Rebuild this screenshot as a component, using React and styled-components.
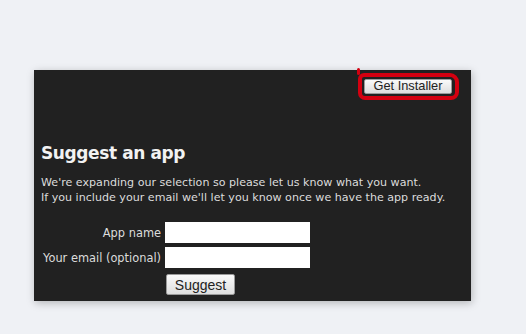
import React from 'react';
import styled, { createGlobalStyle } from 'styled-components';

const PAGE_BG = '#eff1f5';
const PANEL_BG = '#212121';
const RED = '#d40010';

const GlobalStyle = createGlobalStyle`
  html, body {
    margin: 0;
    padding: 0;
    background: ${PAGE_BG};
  }
  body {
    width: 526px;
    height: 334px;
    overflow: hidden;
  }
`

const Page = styled.div`
  padding: 70px 55px 0 34px;
`

const Panel = styled.div`
  width: 437px;
  height: 231px;
  box-sizing: border-box;
  background: ${PANEL_BG};
  box-shadow: 1px 2px 8px rgba(0, 0, 0, 0.25);
  padding: 9px 19px 0 7px;
  font-family: "DejaVu Sans", Verdana, sans-serif;
  color: #e2e2e2;
`

const TopBar = styled.div`
  display: flex;
  justify-content: flex-end;
`

const Highlight = styled.div`
  position: relative;
  display: flex;
  &::before {
    content: '';
    position: absolute;
    left: -6px;
    right: -7px;
    top: -6px;
    bottom: -6px;
    border: 4px solid ${RED};
    border-radius: 6px 9px 8px 7px;
  }
  &::after {
    content: '';
    position: absolute;
    left: -7px;
    top: -11px;
    width: 3px;
    height: 7px;
    background: ${RED};
    border-radius: 2px;
  }
`

const Button = styled.button`
  font-family: "Liberation Sans", Arial, sans-serif;
  font-size: ${p => p.$size || 12.8}px;
  color: #222;
  height: ${p => p.$h || 15}px;
  width: ${p => p.$w}px;
  padding: 0;
  border: 1px solid #9a9a9a;
  border-radius: 2px;
  background: linear-gradient(#fafafa, #dedede);
  line-height: 1;
`

const Title = styled.h1`
  margin: 48px 0 0 0;
  font-size: 17px;
  letter-spacing: -0.4px;
  font-weight: bold;
  color: #f2f2f2;
  line-height: 22px;
`

const Intro = styled.p`
  margin: 11px 0 0 0;
  font-size: 11.1px;
  line-height: 15px;
  color: #dcdcdc;
  white-space: nowrap;
`

const Form = styled.div`
  display: grid;
  grid-template-columns: 120px 145px;
  column-gap: 4px;
  row-gap: 4px;
  margin-top: 17px;
  align-items: center;
`

const Label = styled.label`
  text-align: right;
  font-size: 11.4px;
  color: #dcdcdc;
`

const Input = styled.input`
  box-sizing: border-box;
  width: 145px;
  height: 21px;
  border: none;
  background: #fff;
  margin: 0;
`

const ButtonCell = styled.div`
  grid-column: 2;
  padding: 2px 0 0 1px;
  display: flex;
`

export default function App() {
  return (
    <Page>
      <GlobalStyle />
      <Panel>
        <TopBar>
          <Highlight>
            <Button $w={88}>Get Installer</Button>
          </Highlight>
        </TopBar>
        <Title>Suggest an app</Title>
        <Intro>
          We're expanding our selection so please let us know what you want.<br />
          If you include your email we'll let you know once we have the app ready.
        </Intro>
        <Form>
          <Label>App name</Label>
          <Input type="text" />
          <Label>Your email (optional)</Label>
          <Input type="text" />
          <ButtonCell>
            <Button $w={69} $h={21} $size={14}>Suggest</Button>
          </ButtonCell>
        </Form>
      </Panel>
    </Page>
  );
}
